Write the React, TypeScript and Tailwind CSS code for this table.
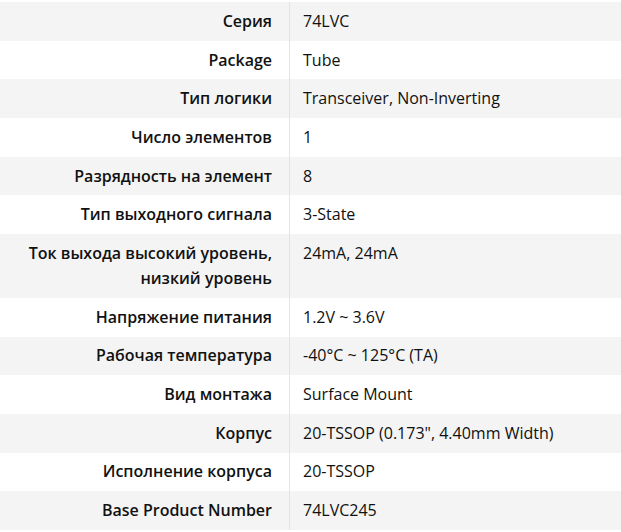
const specs: { label: string; value: string }[] = [
  { label: "Серия", value: "74LVC" },
  { label: "Package", value: "Tube" },
  { label: "Тип логики", value: "Transceiver, Non-Inverting" },
  { label: "Число элементов", value: "1" },
  { label: "Разрядность на элемент", value: "8" },
  { label: "Тип выходного сигнала", value: "3-State" },
  { label: "Ток выхода высокий уровень, низкий уровень", value: "24mA, 24mA" },
  { label: "Напряжение питания", value: "1.2V ~ 3.6V" },
  { label: "Рабочая температура", value: "-40°C ~ 125°C (TA)" },
  { label: "Вид монтажа", value: "Surface Mount" },
  { label: "Корпус", value: "20-TSSOP (0.173\", 4.40mm Width)" },
  { label: "Исполнение корпуса", value: "20-TSSOP" },
  { label: "Base Product Number", value: "74LVC245" },
];

const App = () => {
  return (
    <div className="w-[621px] h-[532px] overflow-hidden bg-white pt-[2px] font-['Open_Sans','Noto_Sans',sans-serif] text-[16px] text-[#111]">
      {specs.map((row, idx) => (
        <div
          key={idx}
          className={`grid grid-cols-[289px_1fr] ${idx % 2 === 0 ? "bg-[#f4f4f4]" : "bg-white"}`}
        >
          {/* Label */}
          <div className="text-right font-semibold leading-[25px] py-[6.85px] pr-[17px] pl-4">
            {row.label}
          </div>
          {/* Value */}
          <div className="border-l border-[#e4e4e4] leading-[25px] py-[6.85px] pl-[13px] pr-4">
            {row.value}
          </div>
        </div>
      ))}
    </div>
  );
};

export default App;
